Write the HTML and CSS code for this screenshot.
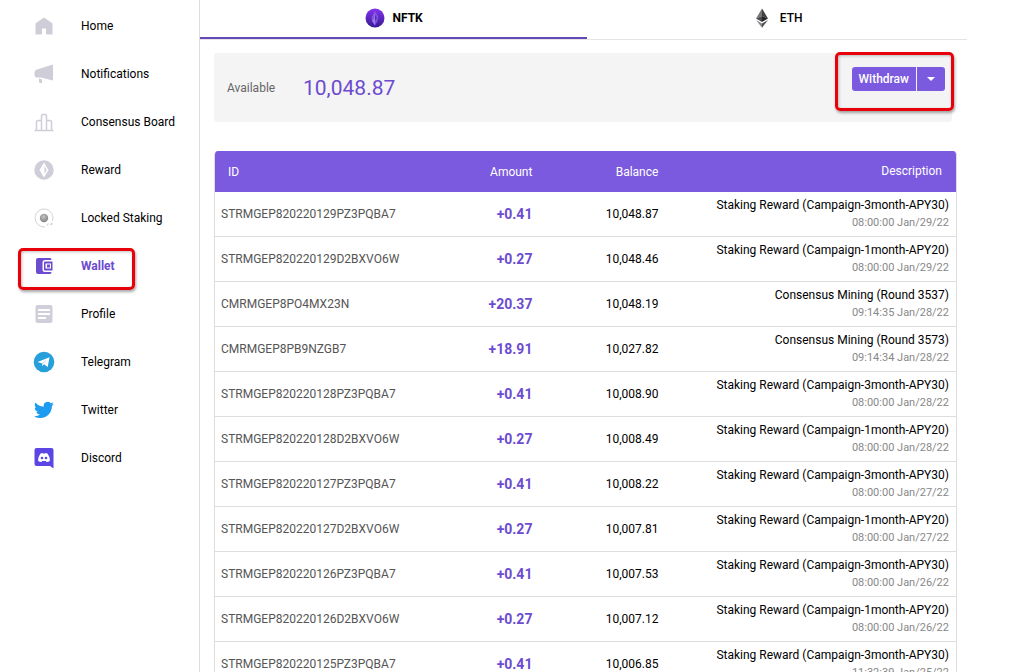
FILE: index.html
```html
<!DOCTYPE html>
<html lang="en">
<head>
  <meta charset="UTF-8" />
  <meta name="viewport" content="width=device-width, initial-scale=1.0" />
  <title>Wallet</title>
  <link rel="stylesheet" href="styles.css">
</head>
<body>
  <nav class="sidebar">
    <a class="nav-link" href="#">
      <svg class="icon" viewBox="0 0 24 24" fill="#cfcdd8"><path d="M12 4 L20 9.5 V20 H14.5 V14 H9.5 V20 H4 V9.5 Z" stroke="#cfcdd8" stroke-linejoin="round"/></svg>
      Home
    </a>
    <a class="nav-link" href="#">
      <svg class="icon" viewBox="0 0 24 24" fill="#cfcdd8"><path d="M21 2.5 V18.5 L9 15.5 H5 Q2.5 15.5 2.5 13 V10.5 Q2.5 8 5 7.5 Z"/><path d="M7 16.5 L10 17.5 V21 H8.5 Q7 21 7 19.5 Z"/></svg>
      Notifications
    </a>
    <a class="nav-link" href="#">
      <svg class="icon" viewBox="0 0 24 24" fill="none" stroke="#cfcdd8" stroke-width="1.5"><path d="M2.5 20.5 H21.5 M4.500 20 V12 Q4.5 10.5 6 10.5 H9 M9.5 20 V6 Q9.5 4.5 11 4.5 H13 Q14.5 4.5 14.5 6 V20 M15 10.5 H18 Q19.5 10.5 19.5 12 V20"/></svg>
      Consensus Board
    </a>
    <a class="nav-link" href="#">
      <svg class="icon" viewBox="0 0 24 24"><circle cx="12" cy="12" r="9.7" fill="#cfcdd8"/><path d="M12 4.500 L16.500 12 L12 19.500 L7.500 12 Z" fill="#fff"/><path d="M12.500 7.500 L14.500 12 L12.500 16 Z" fill="#cfcdd8"/></svg>
      Reward
    </a>
    <a class="nav-link" href="#">
      <svg class="icon" viewBox="0 0 24 24">
        <defs><radialGradient id="ball" cx="0.45" cy="0.35" r="0.6"><stop offset="0" stop-color="#c4c4c4"/><stop offset="1" stop-color="#858585"/></radialGradient></defs>
        <path d="M20.5 15 A9 9 0 1 0 13 20.9" fill="none" stroke="#d4d4d4"/>
        <circle cx="12" cy="12" r="4.2" fill="url(#ball)"/>
        <path d="M14.5 19.5 L15.5 17.5 H17 L16 19.5 Z M18 19 L19 17 H21 L20 19 Z" fill="#d4d4d4"/>
      </svg>
      Locked Staking
    </a>
    <a class="nav-link active" href="#">
      <svg class="icon" viewBox="0 0 24 24"><path d="M6 4 H18 Q19.5 4 19.5 6 H13 Q10.5 6 10.5 8.5 V15.5 Q10.5 18 13 18 H19.5 Q19.5 20 18 20 H6 Q4 20 4 18 V6 Q4 4 6 4 Z" fill="#6c4bd0"/><path d="M13 7.5 H20.5 V16.5 H13 Q12 16.5 12 15.5 V8.5 Q12 7.5 13 7.5 Z M13.5 9.5 V14.5 H19 V9.5 Z" fill="#6c4bd0" fill-rule="evenodd"/><rect x="15" y="10.5" width="3" height="3" fill="#6c4bd0"/></svg>
      Wallet
      <span class="highlight"></span>
    </a>
    <a class="nav-link" href="#">
      <svg class="icon" viewBox="0 0 24 24"><rect x="3.5" y="3" width="17" height="18" rx="2" fill="#d0ced8"/><path d="M6 8 H18 M6 12 H18 M6 16 H14" stroke="#fff" stroke-width="1.8"/></svg>
      Profile
    </a>
    <a class="nav-link" href="#">
      <svg class="icon" viewBox="0 0 24 24"><circle cx="12" cy="12" r="10.3" fill="#279fdb"/><path d="M5.5 12 L17.5 7.2 L15.7 17 L12 14.3 L10.2 16 L9.8 13.2 Z" fill="#fff"/><path d="M9.8 13.2 L15.5 9.2 L11 13.7 L10.2 16 Z" fill="#b9dcee"/></svg>
      Telegram
    </a>
    <a class="nav-link" href="#">
      <svg class="icon" viewBox="0 0 24 24" fill="#1d9bf0"><path transform="translate(2 2) scale(0.83)" d="M23.95 4.57a10 10 0 01-2.82.77 4.96 4.96 0 002.16-2.72c-.95.55-2 .95-3.13 1.18a4.92 4.92 0 00-8.38 4.48C7.69 8.1 4.07 6.13 1.64 3.16a4.82 4.82 0 00-.67 2.48c0 1.71.87 3.21 2.19 4.1a4.9 4.9 0 01-2.23-.62v.06a4.92 4.92 0 003.95 4.83 5 5 0 01-2.21.08 4.94 4.94 0 004.6 3.42A9.87 9.87 0 010 19.54a13.99 13.99 0 007.55 2.21c9.05 0 14-7.5 14-13.98 0-.21 0-.42-.02-.63a9.94 9.94 0 002.46-2.55z"/></svg>
      Twitter
    </a>
    <a class="nav-link" href="#">
      <svg class="icon" viewBox="0 0 24 24"><path d="M4.5 2 H19.5 Q21.5 2 21.5 4 V22.5 L18 20 H4.5 Q2.5 20 2.5 18 V4 Q2.5 2 4.5 2 Z" fill="#5b45e5"/><path d="M8.5 7.5 L11 7 L11.5 7.8 H12.5 L13 7 L15.5 7.5 Q18 11 18 14.5 Q17 16 14.5 16 L13.8 15 H10.2 L9.5 16 Q7 16 6 14.5 Q6 11 8.5 7.5 Z" fill="#fff"/><circle cx="10" cy="12" r="1.3" fill="#5b45e5"/><circle cx="14" cy="12" r="1.3" fill="#5b45e5"/></svg>
      Discord
    </a>
  </nav>

  <main class="content">
    <div class="tabs">
      <button class="tab active">
        <svg class="coin" viewBox="0 0 20 20">
          <defs><linearGradient id="nftk" x1="0" y1="0" x2="0" y2="1"><stop offset="0" stop-color="#8733ee"/><stop offset="1" stop-color="#351a95"/></linearGradient></defs>
          <circle cx="10" cy="10" r="9.5" fill="url(#nftk)"/>
          <path d="M10 3 L13.5 9 L12.5 13 L10 17.5 L7 13 L6.5 9 Z" fill="#8053dc"/>
          <path d="M10 3 V17.5 L7 13 L9 10 Z" fill="#9a76e6"/>
          <path d="M10 7 L12 10 L10 13 Z" fill="#552bb7"/>
        </svg>
        NFTK
      </button>
      <button class="tab">
        <svg class="coin" viewBox="0 0 20 20">
          <path d="M10 0.5 L4 10.5 L10 8 Z" fill="#77777b"/>
          <path d="M10 0.5 L16 10.5 L10 8 Z" fill="#414144"/>
          <path d="M10 8 L4 10.5 L10 14 Z" fill="#4c4c50"/>
          <path d="M10 8 L16 10.5 L10 14 Z" fill="#252528"/>
          <path d="M4 12 L10 15.5 V19.8 Z" fill="#88888c"/>
          <path d="M16 12 L10 15.5 V19.8 Z" fill="#505054"/>
        </svg>
        ETH
      </button>
    </div>

    <div class="balance">
      <span class="balance-label">Available</span>
      <span class="balance-value">10,048.87</span>
      <div class="withdraw">
        <button class="withdraw-btn">Withdraw</button>
        <button class="withdraw-btn withdraw-more" aria-label="More options">
          <svg class="caret" viewBox="0 0 8 4"><path d="M0 0 H8 L4 4 Z" fill="#fff"/></svg>
        </button>
        <span class="highlight"></span>
      </div>
    </div>

    <table class="history">
      <thead>
        <tr>
          <th class="col-id">ID</th>
          <th class="col-num">Amount</th>
          <th class="col-num">Balance</th>
          <th class="col-desc">Description</th>
        </tr>
      </thead>
      <tbody>
        <tr>
          <td class="col-id">STRMGEP820220129PZ3PQBA7</td>
          <td class="col-num amount">+0.41</td>
          <td class="col-num">10,048.87</td>
          <td class="col-desc">Staking Reward (Campaign-3month-APY30)<span class="date">08:00:00 Jan/29/22</span></td>
        </tr>
        <tr>
          <td class="col-id">STRMGEP820220129D2BXVO6W</td>
          <td class="col-num amount">+0.27</td>
          <td class="col-num">10,048.46</td>
          <td class="col-desc">Staking Reward (Campaign-1month-APY20)<span class="date">08:00:00 Jan/29/22</span></td>
        </tr>
        <tr>
          <td class="col-id">CMRMGEP8PO4MX23N</td>
          <td class="col-num amount">+20.37</td>
          <td class="col-num">10,048.19</td>
          <td class="col-desc">Consensus Mining (Round 3537)<span class="date">09:14:35 Jan/28/22</span></td>
        </tr>
        <tr>
          <td class="col-id">CMRMGEP8PB9NZGB7</td>
          <td class="col-num amount">+18.91</td>
          <td class="col-num">10,027.82</td>
          <td class="col-desc">Consensus Mining (Round 3573)<span class="date">09:14:34 Jan/28/22</span></td>
        </tr>
        <tr>
          <td class="col-id">STRMGEP820220128PZ3PQBA7</td>
          <td class="col-num amount">+0.41</td>
          <td class="col-num">10,008.90</td>
          <td class="col-desc">Staking Reward (Campaign-3month-APY30)<span class="date">08:00:00 Jan/28/22</span></td>
        </tr>
        <tr>
          <td class="col-id">STRMGEP820220128D2BXVO6W</td>
          <td class="col-num amount">+0.27</td>
          <td class="col-num">10,008.49</td>
          <td class="col-desc">Staking Reward (Campaign-1month-APY20)<span class="date">08:00:00 Jan/28/22</span></td>
        </tr>
        <tr>
          <td class="col-id">STRMGEP820220127PZ3PQBA7</td>
          <td class="col-num amount">+0.41</td>
          <td class="col-num">10,008.22</td>
          <td class="col-desc">Staking Reward (Campaign-3month-APY30)<span class="date">08:00:00 Jan/27/22</span></td>
        </tr>
        <tr>
          <td class="col-id">STRMGEP820220127D2BXVO6W</td>
          <td class="col-num amount">+0.27</td>
          <td class="col-num">10,007.81</td>
          <td class="col-desc">Staking Reward (Campaign-1month-APY20)<span class="date">08:00:00 Jan/27/22</span></td>
        </tr>
        <tr>
          <td class="col-id">STRMGEP820220126PZ3PQBA7</td>
          <td class="col-num amount">+0.41</td>
          <td class="col-num">10,007.53</td>
          <td class="col-desc">Staking Reward (Campaign-3month-APY30)<span class="date">08:00:00 Jan/26/22</span></td>
        </tr>
        <tr>
          <td class="col-id">STRMGEP820220126D2BXVO6W</td>
          <td class="col-num amount">+0.27</td>
          <td class="col-num">10,007.12</td>
          <td class="col-desc">Staking Reward (Campaign-1month-APY20)<span class="date">08:00:00 Jan/26/22</span></td>
        </tr>
        <tr>
          <td class="col-id">STRMGEP820220125PZ3PQBA7</td>
          <td class="col-num amount">+0.41</td>
          <td class="col-num">10,006.85</td>
          <td class="col-desc">Staking Reward (Campaign-3month-APY30)<span class="date">11:32:39 Jan/25/22</span></td>
        </tr>
      </tbody>
    </table>
  </main>
</body>
</html>
```
FILE: styles.css
```css
* {
  box-sizing: border-box;
}
body {
  margin: 0;
  display: flex;
  height: 100vh;
  overflow: hidden;
  font-family: Roboto, sans-serif;
  font-size: 12px;
  color: #000;
  background: #fff;
}
button {
  font-family: inherit;
  font-size: 12px;
  border: none;
  cursor: pointer;
}
.sidebar {
  flex: 0 0 200px;
  padding-top: 2px;
  border-right: 1px solid #ddd;
}
.nav-link {
  position: relative;
  display: flex;
  align-items: center;
  gap: 25px;
  height: 48px;
  padding-left: 32px;
  color: #000;
  text-decoration: none;
}
.nav-link.active {
  color: #6c4bd0;
  font-weight: bold;
}
.icon {
  width: 24px;
  height: 24px;
}
/* red frame around the item to click */
.highlight {
  position: absolute;
  border: 3px solid #e8000a;
  border-radius: 5px;
  box-shadow: 1px 2px 3px rgba(0,0,0,0.35), inset 1px 1px 3px rgba(0,0,0,0.25);
  pointer-events: none;
}
.nav-link .highlight {
  left: 18px;
  top: 6px;
  width: 117px;
  height: 42px;
}
.content {
  flex: 1;
  min-width: 0;
  padding-right: 57px;
}
.tabs {
  display: flex;
  height: 40px;
  border-bottom: 1px solid #e4e4e4;
}
.tab {
  display: flex;
  flex: 1 1 auto;
  align-items: center;
  justify-content: center;
  gap: 8px;
  padding: 0 0 3px;
  background: none;
  font-weight: 500;
}
.tab.active {
  border-bottom: 2px solid #6548b8;
  padding: 0 0 1px;
  font-weight: bold;
}
.coin {
  width: 20px;
  height: 20px;
}
.balance {
  display: flex;
  align-items: center;
  height: 69px;
  margin: 13px 15px 0 14px;
  padding: 0 7px 0 13px;
  border-radius: 3px;
  background: #f4f4f4;
}
.balance-label {
  width: 76px;
  color: #666;
}
.balance-value {
  font-size: 21px;
  color: #6c4bd0;
}
.withdraw {
  position: relative;
  display: flex;
  align-self: flex-start;
  gap: 1px;
  margin: 14px 0 0 auto;
}
.withdraw-btn {
  height: 24px;
  padding: 0 7px;
  border-radius: 3px 0 0 3px;
  background: #7b5ae0;
  color: #fff;
  font-weight: 500;
}
.withdraw-more {
  display: flex;
  align-items: center;
  padding: 0 10px;
  border-radius: 0 3px 3px 0;
}
.caret {
  width: 8px;
  height: 4px;
}
.withdraw .highlight {
  top: -15px;
  right: -9px;
  bottom: -20px;
  left: -17px;
}
.history {
  width: calc(100% - 24px);
  margin: 29px 0 0 14px;
  border: 1px solid #ddd;
  border-top: none;
  border-radius: 4px;
  border-spacing: 0;
  table-layout: fixed;
  overflow: hidden;
}
.history th {
  height: 41px;
  padding: 0 14px 0 13px;
  background: #7b5ae0;
  color: #fff;
  font-weight: normal;
  text-align: left;
}
.history td {
  height: 45px;
  padding: 0 7px 0 6px;
  border-bottom: 1px solid #ddd;
}
.history .col-id {
  width: 28%;
}
.history td.col-id {
  color: #555;
}
.history .col-num {
  width: 17%;
  padding-right: 16px;
  text-align: right;
}
.history .col-desc {
  text-align: right;
  line-height: 17px;
}
.amount {
  color: #6c4bd0;
  font-size: 14px;
  font-weight: bold;
}
.date {
  display: block;
  color: #888;
  font-size: 11px;
}
```
